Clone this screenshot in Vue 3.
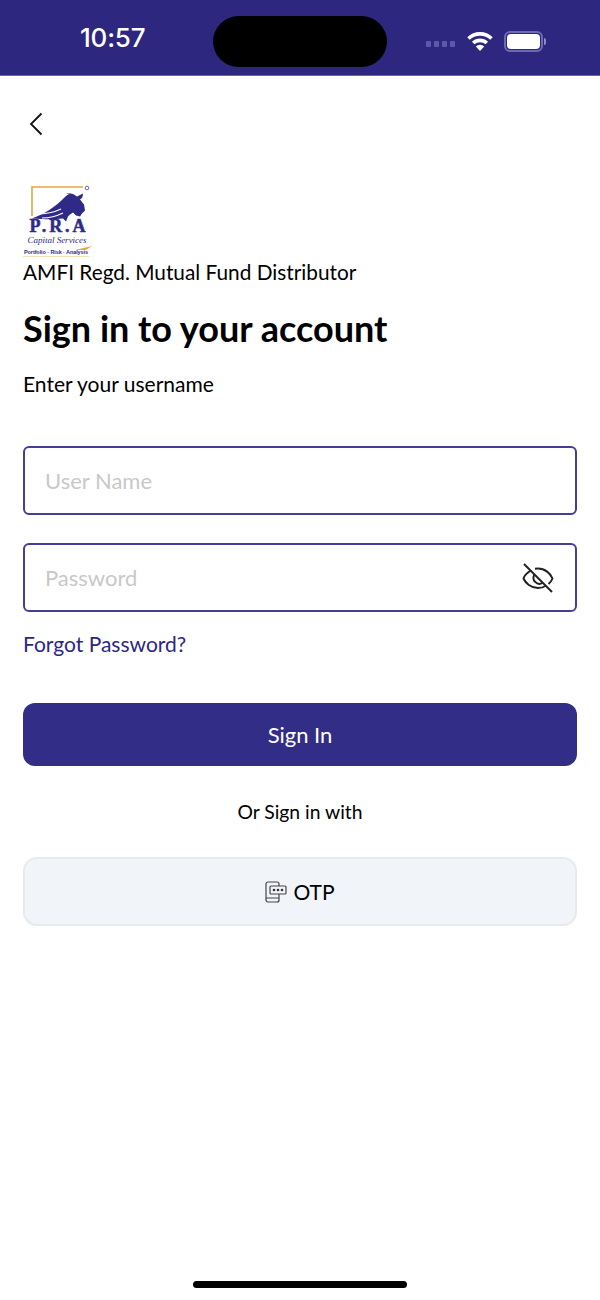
<script setup>
import { ref } from 'vue'

const username = ref('')
const password = ref('')
</script>

<template>
  <div class="screen">
    <header class="status-bar">
      <span class="time">10:57</span>
      <div class="island"></div>
      <div class="status-icons">
        <div class="signal">
          <i></i><i></i><i></i><i></i>
        </div>
        <svg class="wifi" width="28" height="22" viewBox="0 0 28 22">
          <path d="M2.500 8.500a16.500 16.500 0 0 1 23 0" fill="none" stroke="#fff" stroke-width="3.600" />
          <path d="M7.200 13a10 10 0 0 1 13.600 0" fill="none" stroke="#fff" stroke-width="3.600" />
          <path d="M14 21l-4.200-4.600a6 6 0 0 1 8.400 0z" fill="#fff" />
        </svg>
        <div class="battery">
          <div class="battery-fill"></div>
        </div>
        <div class="battery-cap"></div>
      </div>
    </header>

    <main class="content">
      <button class="back" type="button" aria-label="Back">
        <svg width="16" height="26" viewBox="0 0 16 26">
          <path d="M13.500 2.500 3 13l10.500 10.500" fill="none" stroke="#111" stroke-width="1.800" />
        </svg>
      </button>

      <svg class="logo" width="72" height="76" viewBox="0 0 72 76">
        <path d="M9 33V4h51" fill="none" stroke="#e2a93b" stroke-width="1.600" />
        <path d="M10 35C22 31 33 23 41 15c2-2 4-4 6-4l-4-.5c3-1 8 0 11 3l6-3c0 3-1 5-3 6l4 5 1 6-3 3-2 3-4-1-3-3-3 2-2 2-2 5-3-3c-8 1-17 1-31 0z" fill="#2f2a85" />
        <path d="M13 31c9 0 17-1 25-5M19 35c8 0 15-2 21-5" fill="none" stroke="#fff" stroke-width="1.200" />
        <text x="34.500" y="49" class="logo-name" text-anchor="middle" textLength="56">P.R.A</text>
        <text x="34" y="60" class="logo-sub" text-anchor="middle">Capital Services</text>
        <text x="1" y="71" class="logo-tag" textLength="64">Portfolio · Risk · Analysis</text>
        <path d="M52 67l17-4-6 4z" fill="#e2a93b" />
        <path d="M0 73.500h66" stroke="#f0d9a8" stroke-width="0.800" />
        <circle cx="64" cy="5" r="1.800" fill="none" stroke="#2f2a85" stroke-width="0.700" />
      </svg>

      <p class="amfi">AMFI Regd. Mutual Fund Distributor</p>
      <h1 class="title">Sign in to your account</h1>
      <p class="subtitle">Enter your username</p>

      <div class="field first">
        <input v-model="username" type="text" placeholder="User Name" />
      </div>
      <div class="field second">
        <input v-model="password" type="password" placeholder="Password" />
        <svg class="eye" width="32" height="30" viewBox="0 0 32 30">
          <path d="M9 7.500C4.500 10 2 14 1.500 15.500 3.500 20 9 25 16 25c3 0 5.500-.8 7.500-2" fill="none" stroke="#222" stroke-width="2" />
          <path d="M13 5.800c1-.2 2-.3 3-.3 7 0 12.500 5 14.500 10-.8 2-2.200 4-4 5.500" fill="none" stroke="#222" stroke-width="2" />
          <path d="M12.500 11.500a6 6 0 0 0 8 8.500" fill="none" stroke="#222" stroke-width="2" />
          <path d="M2 1l28 28" stroke="#222" stroke-width="2" />
        </svg>
      </div>

      <a class="forgot" href="#">Forgot Password?</a>

      <button class="sign-in" type="button">Sign In</button>
      <p class="or">Or Sign in with</p>

      <button class="otp" type="button">
        <svg width="22" height="22" viewBox="0 0 22 22">
          <rect x="1" y="1" width="13" height="20" rx="2" fill="none" stroke="#444" stroke-width="1.200" />
          <path d="M1 17h13" stroke="#444" stroke-width="1" />
          <rect x="5" y="5" width="16" height="8" rx="1" fill="#f1f4f8" stroke="#444" stroke-width="1.200" />
          <circle cx="9" cy="9" r="1.300" fill="#333" />
          <circle cx="13" cy="9" r="1.300" fill="#333" />
          <circle cx="17" cy="9" r="1.300" fill="#333" />
        </svg>
        <span>OTP</span>
      </button>
    </main>

    <div class="home-indicator"></div>
  </div>
</template>

<style>
body {
  margin: 0;
  background: #fff;
}
</style>

<style scoped>
.screen {
  width: 600px;
  height: 1300px;
  display: flex;
  flex-direction: column;
  background: #fff;
  font-family: Lato, "Open Sans", sans-serif;
  color: #000;
  overflow: hidden;
  position: relative;
}

.status-bar {
  height: 75px;
  flex-shrink: 0;
  border-bottom: 1px solid #6a64b0;
  background: #2e2780;
  display: flex;
  align-items: center;
  position: relative;
}

.time {
  margin-left: 80px;
  font-family: Inter, Roboto, sans-serif;
  font-size: 26px;
  font-weight: 500;
  color: #fff;
  letter-spacing: -0.2px;
}

.island {
  position: absolute;
  left: 213px;
  top: 16px;
  width: 174px;
  height: 51px;
  border-radius: 26px;
  background: #000;
}

.status-icons {
  position: absolute;
  left: 426px;
  top: 29px;
  display: flex;
  align-items: center;
  height: 24px;
}

.signal {
  display: flex;
  gap: 3px;
  margin-top: 6px;
}

.signal i {
  width: 5px;
  height: 6px;
  border-radius: 1px;
  background: #5e58a8;
}

.wifi {
  margin-left: 11px;
}

.battery {
  width: 39px;
  height: 21px;
  margin-left: 10px;
  box-sizing: border-box;
  border: 2px solid #6e69b5;
  border-radius: 6px;
  padding: 1px;
}

.battery-fill {
  height: 100%;
  background: #fff;
  border-radius: 4px;
}

.battery-cap {
  width: 2px;
  height: 7px;
  margin-left: 1px;
  border-radius: 0 2px 2px 0;
  background: #8f8bc7;
}

.content {
  display: flex;
  flex-direction: column;
  padding: 0 23px;
}

.back {
  width: 26px;
  height: 26px;
  margin: 35px 0 0 5px;
  padding: 0;
  border: 0;
  background: none;
  display: flex;
}

.logo {
  margin-top: 46px;
  display: block;
}

.logo-name {
  font-family: "Liberation Serif", serif;
  font-size: 18px;
  font-weight: 700;
  fill: #2f2a85;
  stroke: #2f2a85;
  stroke-width: 0.5px;
}

.logo-sub {
  font-family: "Liberation Serif", serif;
  font-size: 9px;
  font-style: italic;
  fill: #2f2a85;
}

.logo-tag {
  font-family: "Liberation Sans", sans-serif;
  font-size: 5.500px;
  font-weight: 700;
  fill: #2f2a85;
}

.amfi {
  margin: 0;
  font-size: 20.800px;
  line-height: 26px;
}

.title {
  margin: 21px 0 0;
  font-size: 36px;
  line-height: 44px;
  font-weight: 700;
}

.subtitle {
  margin: 21px 0 0;
  font-size: 21px;
  line-height: 26px;
}

.field {
  height: 69px;
  box-sizing: border-box;
  border: 2px solid #443e99;
  border-radius: 6px;
  display: flex;
  align-items: center;
  padding: 0 21px 0 20px;
}

.field.first {
  margin-top: 49px;
}

.field.second {
  margin-top: 28px;
}

.field input {
  flex: 1;
  min-width: 0;
  border: 0;
  outline: 0;
  padding: 0;
  background: none;
  font-family: inherit;
  font-size: 22px;
  color: #000;
}

.field input::placeholder {
  color: #c8c8c8;
  opacity: 1;
}

.forgot {
  margin-top: 18px;
  font-size: 21px;
  line-height: 28px;
  color: #2e2780;
  text-decoration: none;
}

.sign-in {
  height: 63px;
  margin-top: 45px;
  border: 0;
  border-radius: 12px;
  background: #322e87;
  color: #fff;
  font-family: inherit;
  font-size: 22px;
}

.or {
  margin: 33px 0 0;
  text-align: center;
  font-size: 19.300px;
  line-height: 26px;
}

.otp {
  height: 69px;
  margin-top: 32px;
  box-sizing: border-box;
  border: 2px solid #e8eaec;
  border-radius: 14px;
  background: #f1f4f8;
  color: #000;
  font-family: inherit;
  font-size: 21px;
  display: flex;
  align-items: center;
  justify-content: center;
  gap: 6px;
}

.home-indicator {
  position: absolute;
  left: 193px;
  top: 1281px;
  width: 214px;
  height: 7px;
  border-radius: 4px;
  background: #000;
}
</style>
